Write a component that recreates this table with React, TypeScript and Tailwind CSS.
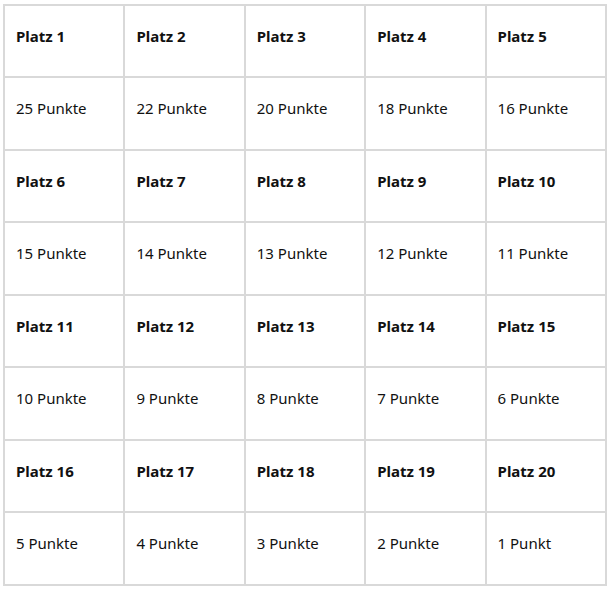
const ROWS: string[][] = [];
const points = [25, 22, 20, 18, 16, 15, 14, 13, 12, 11, 10, 9, 8, 7, 6, 5, 4, 3, 2, 1];

for (let r = 0; r < 4; r++) {
  const places: string[] = [];
  const pts: string[] = [];
  for (let c = 0; c < 5; c++) {
    const i = r * 5 + c;
    places.push(`Platz ${i + 1}`);
    pts.push(points[i] === 1 ? "1 Punkt" : `${points[i]} Punkte`);
  }
  ROWS.push(places, pts);
}

export default function App() {
  return (
    <div className="bg-white w-[612px] h-[589px] pl-[3px] pt-[4px]" style={{ fontFamily: "'Noto Sans', sans-serif" }}>
      <table className="border-collapse w-[604px] table-fixed text-[15px] text-[#111]">
        <tbody>
          {ROWS.map((row, ri) => (
            <tr key={ri} className={ri % 2 === 0 ? "h-[72px]" : "h-[73px]"}>
              {row.map((cell, ci) => (
                <td
                  key={ci}
                  className={`border-2 border-[#d9d9d9] align-top pl-[11px] pt-[19px] ${ri % 2 === 0 ? "font-bold" : ""}`}
                >
                  {cell}
                </td>
              ))}
            </tr>
          ))}
        </tbody>
      </table>
    </div>
  );
}
